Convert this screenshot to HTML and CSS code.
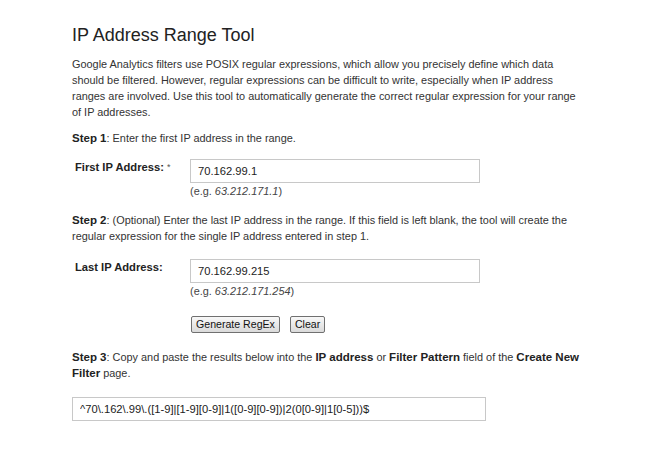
FILE: index.html
```html
<!DOCTYPE html>
<html lang="en">
<head>
    <meta charset="UTF-8">
    <title>IP Address Range Tool</title>
    <link rel="stylesheet" href="styles.css">
</head>
<body>

    <div class="container">
        <h1>IP Address Range Tool</h1>
        <p>Google Analytics filters use POSIX regular expressions, which allow you precisely define which data<br>
        should be filtered. However, regular expressions can be difficult to write, especially when IP address<br>
        ranges are involved. Use this tool to automatically generate the correct regular expression for your range<br>
        of IP addresses.</p>

        <p class="step"><b>Step 1</b>: Enter the first IP address in the range.</p>
        <div class="field">
            <label for="firstIp">First IP Address: <span class="req">*</span></label>
            <div class="control">
                <input type="text" id="firstIp" value="70.162.99.1">
                <div class="hint">(e.g. <i>63.212.171.1</i>)</div>
            </div>
        </div>

        <p class="step step-long"><b>Step 2</b>: (Optional) Enter the last IP address in the range. If this field is left blank, the tool will create the<br>
        regular expression for the single IP address entered in step 1.</p>
        <div class="field">
            <label for="lastIp">Last IP Address:</label>
            <div class="control">
                <input type="text" id="lastIp" value="70.162.99.215">
                <div class="hint">(e.g. <i>63.212.171.254</i>)</div>
            </div>
        </div>

        <div class="buttons">
            <button>Generate RegEx</button>
            <button>Clear</button>
        </div>

        <p class="step"><b>Step 3</b>: Copy and paste the results below into the <b>IP address</b> or <b>Filter Pattern</b> field of the <b>Create New</b><br>
        <b>Filter</b> page.</p>
        <input type="text" class="result" value="^70\.162\.99\.([1-9]|[1-9][0-9]|1([0-9][0-9])|2(0[0-9]|1[0-5]))$">
    </div>

</body>
</html>
```

FILE: styles.css
```css
body { margin: 0; background: #fff; font-family: "Liberation Sans", Arial, sans-serif; font-size: 10.9px; color: #333; }
.container { width: 560px; padding: 24px 0 0 72px; }
h1 { margin: 0 0 10px; font-size: 18px; font-weight: normal; line-height: 22px; color: #222; }
p { margin: 0 0 10px; line-height: 16px; white-space: nowrap; }
b { font-size: 11.5px; color: #222; }
.step { margin-bottom: 13px; }
.step-long { margin-bottom: 15px; }
.field { display: flex; margin: 0 0 13px; }
label { width: 115px; padding: 0 0 0 3px; line-height: 16px; font-size: 11.2px; font-weight: bold; color: #222; }
.req { font-weight: normal; font-size: 9px; color: #555; vertical-align: top; }
input[type="text"] { box-sizing: border-box; width: 290px; height: 24px; padding: 0 7px; border: 1px solid #c8c8c8; font-family: inherit; font-size: 11.2px; color: #222; }
.hint { line-height: 16px; color: #444; }
.buttons { display: flex; gap: 10px; margin: 17px 0 16px 119px; }
button { height: 17px; padding: 0 4px; border: 1px solid #707070; border-radius: 2px; background: linear-gradient(#f8f8f8, #dadada); font-family: inherit; font-size: 10.6px; color: #111; line-height: 13px; }
.result { width: 414px !important; margin-top: 3px; }
```
